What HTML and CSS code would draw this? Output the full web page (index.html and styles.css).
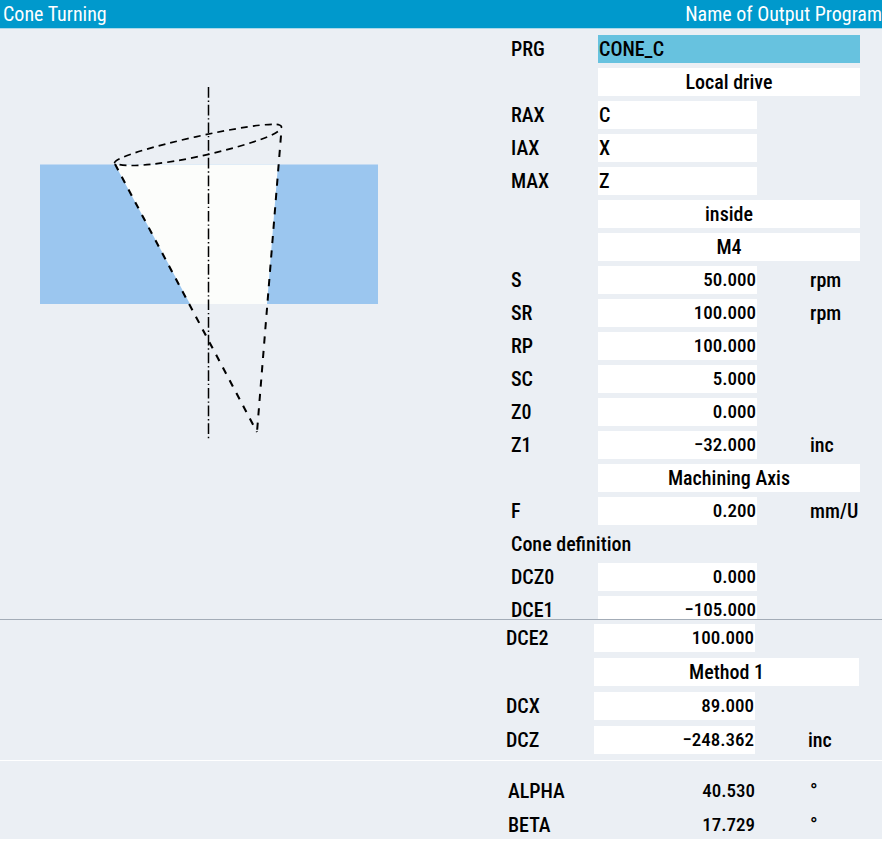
FILE: index.html
```html
<!DOCTYPE html>
<html lang="en">
<head>
<meta charset="utf-8">
<title>Cone Turning</title>
<link rel="stylesheet" href="styles.css">
</head>
<body>
<div class="screen">
  <header class="titlebar">
    <h1 class="title">Cone Turning</h1>
    <p class="hint">Name of Output Program</p>
  </header>
  <form>
    <section class="panel panel-main">
      <svg class="diagram" viewBox="38 84 342 356" role="img" aria-label="Cone cross-section">
        <rect x="40" y="164.5" width="338" height="139.5" fill="#9bc6ef"/>
        <path d="M115 164.5H278L267 304H190Z" fill="#fcfdfb"/>
        <g fill="none" stroke="#000">
          <path d="M208.5 87V439" stroke-width="1.5" stroke-dasharray="10.7 2.8 1.4 2.8"/>
          <path d="M114.5 163C116 152 265 119 279.5 125C285 127 279 133 262 139C205 159 128 171 114.5 163" stroke-width="1.7" stroke-dasharray="7 5"/>
          <path d="M115 164L257 432" stroke-width="2.1" stroke-dasharray="7 7.4"/>
          <path d="M281 135.5L257 432" stroke-width="2" stroke-dasharray="7.2 7.2"/>
        </g>
      </svg>
      <div class="fields">
        <div class="row"><label for="prg">PRG</label><input class="wide active" id="prg" value="CONE_C"></div>
        <div class="row"><select class="wide" aria-label="Drive"><option>Local drive</option></select></div>
        <div class="row"><label for="rax">RAX</label><input id="rax" value="C"></div>
        <div class="row"><label for="iax">IAX</label><input id="iax" value="X"></div>
        <div class="row"><label for="max">MAX</label><input id="max" value="Z"></div>
        <div class="row"><select class="wide" aria-label="Side"><option>inside</option></select></div>
        <div class="row"><select class="wide" aria-label="Spindle direction"><option>M4</option></select></div>
        <div class="row"><label for="s">S</label><input class="num" id="s" value="50.000"><span class="unit">rpm</span></div>
        <div class="row"><label for="sr">SR</label><input class="num" id="sr" value="100.000"><span class="unit">rpm</span></div>
        <div class="row"><label for="rp">RP</label><input class="num" id="rp" value="100.000"></div>
        <div class="row"><label for="sc">SC</label><input class="num" id="sc" value="5.000"></div>
        <div class="row"><label for="z0">Z0</label><input class="num" id="z0" value="0.000"></div>
        <div class="row"><label for="z1">Z1</label><input class="num" id="z1" value="−32.000"><span class="unit">inc</span></div>
        <div class="row"><select class="wide" aria-label="Axis"><option>Machining Axis</option></select></div>
        <div class="row"><label for="f">F</label><input class="num" id="f" value="0.200"><span class="unit">mm/U</span></div>
        <div class="row"><h2 class="group">Cone definition</h2></div>
        <div class="row"><label for="dcz0">DCZ0</label><input class="num" id="dcz0" value="0.000"></div>
        <div class="row cut"><label for="dce1">DCE1</label><input class="num" id="dce1" value="−105.000"></div>
      </div>
    </section>
    <section class="panel panel-more">
      <div class="fields">
        <div class="row"><label for="dce2">DCE2</label><input class="num" id="dce2" value="100.000"></div>
        <div class="row"><select class="wide" aria-label="Method"><option>Method 1</option></select></div>
        <div class="row"><label for="dcx">DCX</label><input class="num" id="dcx" value="89.000"></div>
        <div class="row"><label for="dcz">DCZ</label><input class="num" id="dcz" value="−248.362"><span class="unit">inc</span></div>
      </div>
    </section>
    <section class="panel panel-result">
      <div class="fields">
        <div class="row"><label for="alpha">ALPHA</label><output class="num" id="alpha">40.530</output><span class="unit">°</span></div>
        <div class="row"><label for="beta">BETA</label><output class="num" id="beta">17.729</output><span class="unit">°</span></div>
      </div>
    </section>
  </form>
</div>
</body>
</html>
```
FILE: styles.css
```css
* { box-sizing: border-box; }

body {
  margin: 0;
  background: #fff;
  color: #000;
  font: 500 20px/28px "Roboto Condensed", "Liberation Sans Narrow", Roboto, sans-serif;
}

.screen { margin-right: 5px; }

.titlebar {
  display: flex;
  justify-content: space-between;
  height: 29px;
  padding-left: 3px;
  border-bottom: 1px solid #a9d8ea;
  background: #0099cc;
  color: #fff;
  font-weight: 400;
}

.title, .hint, .group {
  margin: 0;
  font-size: inherit;
  font-weight: inherit;
  white-space: nowrap;
}

.panel {
  display: flex;
  justify-content: space-between;
  background: #ebeff4;
}

.panel-main {
  padding: 6px 22px 0 38px;
  border-bottom: 1px solid #a3acb7;
}

.diagram {
  width: 342px;
  height: 356px;
  margin-top: 49px;
}

.fields {
  display: flex;
  flex-direction: column;
  gap: 5px;
  margin-left: auto;
}

.row {
  display: grid;
  grid-template-columns: 87px 159px 53px 50px;
  height: 28px;
}

.row label { grid-column: 1; }

.row input, .row select, .row output {
  grid-column: 2;
  width: 100%;
  height: 28px;
  margin: 0;
  padding: 0 1px;
  border: 0;
  border-radius: 0;
  background: #fff;
  color: inherit;
  font: inherit;
  appearance: none;
}

.row .wide { grid-column: 2 / 5; }
.row select { text-align: center; text-align-last: center; }
.row .active { background: #67c2df; }
.row .num { font-size: 19px; text-align: right; }
.row output { background: none; }
.unit { grid-column: 4; white-space: nowrap; }
.group { grid-column: 1 / 3; }

.cut { height: 23px; overflow: hidden; }

.panel-more {
  padding: 4px 23px 6px 0;
  border-bottom: 1px solid #fff;
}

.panel-more .fields { gap: 6px; }
.panel-more .row { grid-template-columns: 88px 161px 53px 51px; }

.panel-result { padding: 16px 22px 0 0; }
.panel-result .row { grid-template-columns: 90px 158px 54px 50px; }
.panel-result .fields { gap: 6px; }
```
